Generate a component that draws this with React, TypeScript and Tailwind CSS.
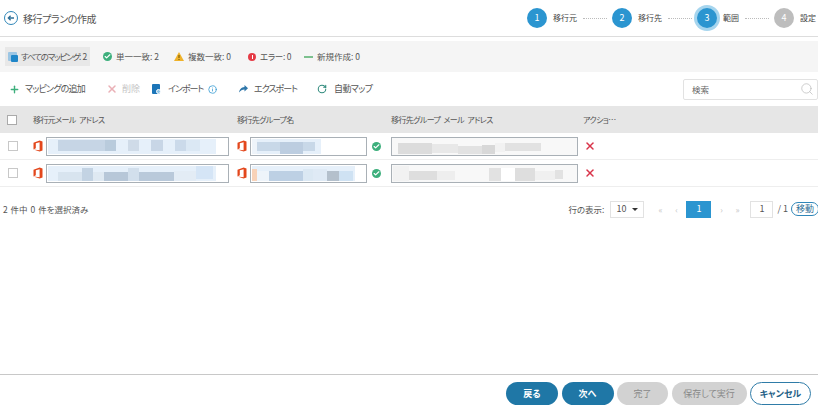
import { Check, X, Plus, RotateCw, Search, Info } from 'lucide-react';

const font = '[font-family:"Noto_Sans_CJK_JP","Noto_Sans",sans-serif] [font-feature-settings:"palt"]';

// width, colour, top offset, height of a smudge inside a redacted field
type Block = [number, string, number, number];

const rows: { src: Block[]; srcTint: number; name: Block[]; nameTint: number; mail: Block[] }[] = [
  {
    srcTint: 168,
    src: [
      [10, 'transparent', 0, 0], [47, '#c6d5e5', 1, 11], [11, '#b9cbdc', 1, 11], [12, 'transparent', 0, 0], [11, '#cfdbe8', 1, 11],
      [12, 'transparent', 0, 0], [12, '#c8d6e6', 1, 11], [12, 'transparent', 0, 0], [11, '#cbdaea', 1, 11], [14, '#dbe8f4', 1, 11],
    ],
    nameTint: 69,
    name: [[5, '#eef4fa', 0, 15], [23, '#c8d8e8', 3, 9], [23, '#bccde0', 3, 12], [12, '#c8d8e8', 3, 9]],
    mail: [[5, 'transparent', 0, 0], [34, '#dcdcdc', 4, 11], [26, '#e8e8e8', 5, 9], [24, '#e2e2e2', 7, 8], [13, '#d8d8d8', 6, 9], [10, '#f2f2f2', 4, 9], [36, '#e2e2e2', 4, 8]],
  },
  {
    srcTint: 168,
    src: [
      [10, 'transparent', 0, 0], [24, '#d8e4ef', 6, 9], [11, '#c3d3e3', 2, 13], [11, '#dfe9f2', 6, 9], [24, '#b7c7d8', 6, 9], [11, '#d2dfec', 2, 13],
      [35, '#b9c9da', 6, 9], [22, '#e3ecf5', 5, 10], [17, '#d5e5f6', 0, 13],
    ],
    nameTint: 103,
    name: [[5, '#f8d2b8', 3, 12], [12, '#eef4fa', 5, 10], [34, '#bdd0e4', 5, 10], [10, '#dbe8f3', 3, 12], [14, '#dfeaf5', 3, 12], [12, '#b4c0cc', 5, 10], [14, '#cfe2f3', 5, 10]],
    mail: [[16, '#f2f2f2', 0, 15], [28, '#dedede', 5, 9], [18, '#eeeeee', 5, 9], [34, '#f8f8f8', 4, 9], [12, '#e2e2e2', 2, 13], [14, '#ffffff', 2, 13], [20, '#dedede', 2, 13], [20, '#f0f0f0', 5, 9], [8, '#e2e2e2', 4, 9]],
  },
];

function OfficeIcon() {
  return (
    <svg width="10" height="12" viewBox="0 0 10 12" className="shrink-0">
      <path d="M0.5 2.8 6.6 0.5 9.5 1.4V10.6L6.6 11.5 0.5 9.4 6.6 10.2V2.2L2.8 3.2V8.2L0.5 9.4Z" fill="#e3471c" />
    </svg>
  );
}

function BlurField({ blocks, width, tint, gray }: { blocks: Block[]; width: string; tint?: number; gray?: boolean }) {
  return (
    <div className={`relative flex h-[19px] items-start border border-[#a9b0b6] p-px overflow-hidden ${width} ${gray ? 'bg-[#f8f8f8]' : 'bg-white'}`}>
      {tint && <div className="absolute inset-y-px left-px bg-[#e6f0fa]" style={{ width: tint }} />}
      {blocks.map(([w, c, top, h], i) => (
        <div key={i} className="relative shrink-0" style={{ width: w, backgroundColor: c, marginTop: top, height: h }} />
      ))}
    </div>
  );
}

function OkDot({ size = 9 }: { size?: number }) {
  return (
    <span className="flex items-center justify-center rounded-full bg-[#3daf7c] shrink-0" style={{ width: size, height: size }}>
      <Check size={size - 2} strokeWidth={4} className="text-white" />
    </span>
  );
}

function Step({ n, label, on, active }: { n: number; label: string; on?: boolean; active?: boolean }) {
  return (
    <div className="flex shrink-0 items-center">
      <div className={`flex h-5 w-5 shrink-0 items-center justify-center rounded-full text-[9px] text-white ${on ? 'bg-[#2b95d0]' : 'bg-[#bdbdbd]'} ${active ? 'ring-[3px] ring-[#a6d5ee]' : ''}`}>
        {n}
      </div>
      <span className="ml-[6px] text-[8px] whitespace-nowrap text-[#444]">{label}</span>
    </div>
  );
}

function Dots() {
  return <div className="ml-[6px] mr-[5px] w-6 shrink-0 border-t border-dotted border-[#bbb]" />;
}

function Tally({ icon, label, className }: { icon: React.ReactNode; label: string; className: string }) {
  return (
    <div className={`flex shrink-0 items-center gap-[4px] text-[8.5px] text-[#555] whitespace-nowrap ${className}`}>
      {icon}
      <span>{label}</span>
    </div>
  );
}

function Tool({ icon, label, className, muted }: { icon: React.ReactNode; label: string; className: string; muted?: boolean }) {
  return (
    <div className={`flex shrink-0 items-center text-[9px] whitespace-nowrap ${muted ? 'text-[#c4c4c4]' : 'text-[#555]'} ${className}`}>
      {icon}
      <span>{label}</span>
    </div>
  );
}

function Pill({ label, className }: { label: string; className: string }) {
  return (
    <button className={`flex h-[23px] items-center justify-center rounded-full text-[9px] font-bold ${className}`}>
      {label}
    </button>
  );
}

export default function App() {
  return (
    <div className={`flex h-[410px] w-[818px] flex-col overflow-hidden bg-white ${font}`}>
      <header className="flex h-[37px] shrink-0 items-center border-b border-[#ddd] pl-1">
        <div className="flex h-[14px] w-[14px] items-center justify-center rounded-full border border-[#2f86b8]">
          <svg width="8" height="8" viewBox="0 0 8 8">
            <path d="M7 4H1.5M3.6 1.8 1.3 4l2.3 2.2" fill="none" stroke="#2f6f96" strokeWidth="1.3" />
          </svg>
        </div>
        <h1 className="ml-[5px] text-[10px] font-normal tracking-[-0.4px] text-[#555]">移行プランの作成</h1>
        <div className="ml-auto flex w-[291px] shrink-0 items-center">
          <Step n={1} label="移行元" on />
          <Dots />
          <Step n={2} label="移行先" on />
          <Dots />
          <Step n={3} label="範囲" on active />
          <Dots />
          <Step n={4} label="設定" />
        </div>
      </header>

      <div className="mt-1 flex h-[31px] shrink-0 items-center bg-[#f5f5f5] pl-[5px]">
        <Tally
          className="h-[19px] w-[85px] gap-[3px] bg-[#e8e8e8] pl-[3px] tracking-[-1.2px] [word-spacing:1.5px]"
          icon={
            <span className="relative block h-[9px] w-[9px] shrink-0 rounded-[1px] bg-[#9cc6e4]">
              <span className="absolute bottom-[-1px] right-[-1px] h-[7px] w-[7px] rounded-[1px] bg-[#1f86c8]" />
            </span>
          }
          label="すべてのマッピング: 2"
        />
        <Tally className="ml-[13px] w-[71px]" icon={<OkDot />} label="単一一致: 2" />
        <Tally
          className="w-[74px]"
          icon={
            <svg width="10" height="9" viewBox="0 0 10 9" className="shrink-0">
              <path d="M5 0 10 9H0Z" fill="#efb22a" />
              <path d="M5 3v3M5 7v1" stroke="#5a4300" strokeWidth="0.9" />
            </svg>
          }
          label="複数一致: 0"
        />
        <Tally
          className="w-[56px] tracking-[-0.3px]"
          icon={
            <span className="flex h-2 w-2 shrink-0 items-center justify-center rounded-full bg-[#e53b46]">
              <span className="h-1 w-px bg-white" />
            </span>
          }
          label="エラー: 0"
        />
        <Tally className="" icon={<span className="h-[2px] w-[9px] shrink-0 bg-[#7cc08e]" />} label="新規作成: 0" />
      </div>

      <div className="flex h-[34px] shrink-0 items-center pl-[9px]">
        <Tool className="w-[97px] tracking-[-0.8px]" icon={<Plus size={11} strokeWidth={3} className="mr-[5px] shrink-0 text-[#3daf7c]" />} label="マッピングの追加" />
        <Tool className="w-[46px]" muted icon={<X size={12} strokeWidth={3} className="mr-[4px] shrink-0 text-[#eab0b6]" />} label="削除" />
        <Tool
          className="w-[56px] tracking-[-1px]"
          icon={
            <span className="relative mr-2 block h-[10px] w-2 shrink-0 rounded-[1px] bg-[#1c75b8]">
              <span className="absolute bottom-0 right-[-1px] h-[5px] w-[5px] rounded-full border border-white bg-[#8cc4e8]" />
            </span>
          }
          label="インポート"
        />
        <Info size={9} className="mr-[22px] shrink-0 text-[#2b95d0]" />
        <Tool
          className="w-[78px] tracking-[-1px]"
          icon={
            <svg width="9" height="8" viewBox="0 0 9 8" className="mr-[6px] shrink-0">
              <path d="M5.5 0 9 3.2 5.5 6.4V4.4C3.2 4.4 1.6 5.2 0 7.6 0.4 4.4 2.4 2 5.5 1.9Z" fill="#2f77aa" />
            </svg>
          }
          label="エクスポート"
        />
        <Tool className="tracking-[-0.6px]" icon={<RotateCw size={10} strokeWidth={2.5} className="mr-[7px] shrink-0 text-[#2f8a7c]" />} label="自動マップ" />
        <div className="ml-auto flex h-[21px] w-[135px] items-center justify-between rounded-[2px] border border-[#e2e2e2] pl-2 pr-[3px] text-[8.5px] text-[#666]">
          <span>検索</span>
          <Search size={14} strokeWidth={1.25} className="text-[#bbb]" />
        </div>
      </div>

      <div className="grid h-[27px] shrink-0 grid-cols-[33px_204px_154px_192px_1fr] items-center bg-[#e6e6e6] text-[8px] tracking-[-0.6px] text-[#555] [word-spacing:2px]">
        <span className="ml-[7px] h-[10px] w-[10px] border border-[#aaa] bg-white" />
        <span>移行元メール アドレス</span>
        <span>移行先グループ名</span>
        <span>移行先グループ メール アドレス</span>
        <span>アクショ…</span>
      </div>

      {rows.map((row, i) => (
        <div key={i} className="grid h-[27px] shrink-0 grid-cols-[33px_204px_154px_192px_1fr] items-center border-b border-[#eee]">
          <span className="ml-2 h-[10px] w-[10px] border border-[#c8c8c8] bg-white" />
          <div className="flex items-center gap-[3px]">
            <OfficeIcon />
            <BlurField blocks={row.src} tint={row.srcTint} width="w-[183px]" />
          </div>
          <div className="flex items-center gap-[3px]">
            <OfficeIcon />
            <BlurField blocks={row.name} tint={row.nameTint} width="w-[117px]" />
            <span className="ml-[2px]"><OkDot /></span>
          </div>
          <BlurField blocks={row.mail} width="w-[187px]" gray />
          <X size={12} strokeWidth={3} className="ml-[1px] text-[#d9344a]" />
        </div>
      ))}

      <div className="mt-[13px] flex h-[18px] shrink-0 items-center text-[8.5px] text-[#555]">
        <span className="ml-[3px] [word-spacing:1px]">2 件中 0 件を選択済み</span>
        <div className="ml-auto flex items-center">
          <span>行の表示:</span>
          <div className="ml-[6px] flex h-[17px] w-[34px] items-center justify-between border border-[#e2e2e2] pl-[5px] pr-[5px] text-[9px]">
            <span>10</span>
            <span className="h-0 w-0 border-x-[3px] border-t-[3px] border-x-transparent border-t-[#333]" />
          </div>
          <div className="ml-[6px] flex w-[20px] justify-center text-[#c4c4c4]">«</div>
          <div className="flex w-[12px] justify-center text-[#c4c4c4]">‹</div>
          <div className="ml-[4px] flex h-[17px] w-[25px] items-center justify-center bg-[#2b95d0] text-[9px] text-white">1</div>
          <div className="ml-[4px] flex w-[12px] justify-center text-[#c4c4c4]">›</div>
          <div className="flex w-[20px] justify-center text-[#c4c4c4]">»</div>
          <div className="ml-[3px] flex h-[17px] w-[23px] items-center justify-center border border-[#e2e2e2] text-[9px]">1</div>
          <span className="ml-[4px] text-[9px] whitespace-nowrap">/ 1</span>
          <div className="ml-[3px] mr-[-1px] flex h-[14px] w-[28px] shrink-0 items-center justify-center rounded-full border border-[#2f86b8] text-[9px] text-[#2f6f96]">
            移動
          </div>
        </div>
      </div>

      <footer className="mt-auto flex h-[36px] shrink-0 items-start justify-end gap-[3.5px] border-t border-[#c8c8c8] pr-[7px] pt-[7px]">
        <Pill label="戻る" className="w-[52px] bg-[#1f77a6] text-white" />
        <Pill label="次へ" className="w-[52px] bg-[#1f77a6] text-white" />
        <Pill label="完了" className="w-[51px] bg-[#d2d2d2] !font-normal text-[#888]" />
        <Pill label="保存して実行" className="w-[75px] bg-[#d2d2d2] !font-normal text-[#888]" />
        <Pill label="キャンセル" className="w-[61px] border border-[#2f7ca8] bg-white text-[#1f5f86]" />
      </footer>
    </div>
  );
}
